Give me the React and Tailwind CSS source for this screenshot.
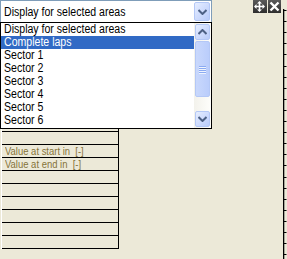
import React from "react";

const FONT = { fontFamily: '"Liberation Sans", Arial, sans-serif' };

function Chevron({ up = false }) {
  return (
    <svg width="9" height="6" viewBox="0 0 9 6" className="block">
      {up ? (
        <path d="M0.5 5 L4.5 1 L8.5 5" fill="none" stroke="#4D6185" strokeWidth="2" />
      ) : (
        <path d="M0.5 1 L4.5 5 L8.5 1" fill="none" stroke="#4D6185" strokeWidth="2" />
      )}
    </svg>
  );
}

function XpButton({ up, className = "" }) {
  return (
    <div
      className={
        "flex items-center justify-center rounded-[2px] border border-[#B4C8F6] bg-gradient-to-br from-[#E6EEFF] via-[#CFDCFD] to-[#B9CCFA] " +
        className
      }
    >
      <Chevron up={up} />
    </div>
  );
}

function Ruler() {
  const ticks = [];
  for (let i = 0; i < 23; i++) ticks.push(10 + i * 11.1);
  return (
    <svg width="6" height="259" viewBox="0 0 6 259" className="block">
      <rect x="2" y="9" width="1.3" height="250" fill="#000" />
      {ticks.map((y, i) => (
        <rect key={i} x="3" y={Math.round(y)} width="2.5" height="1" fill="#000" />
      ))}
    </svg>
  );
}

const items = [
  "Display for selected areas",
  "Complete laps",
  "Sector 1",
  "Sector 2",
  "Sector 3",
  "Sector 4",
  "Sector 5",
  "Sector 6",
];

function Narrow({ children }) {
  return (
    <span className="inline-block origin-left scale-x-[0.88] whitespace-nowrap">{children}</span>
  );
}

export default function App() {
  const rows = Array.from({ length: 17 }, (_, i) => i);
  return (
    <div className="relative flex h-[259px] w-[287px] overflow-hidden bg-[#ECE9D8]" style={FONT}>
      {/* left area */}
      <div className="flex w-[253px] flex-col">
        {/* select */}
        <div className="flex h-[23px] w-[212px] items-center border border-[#7F9DB9] bg-white">
          <div className="flex-1 overflow-hidden pl-[3px] pt-[2px] text-[12px] leading-[13px] text-black">
            <Narrow>Display for selected areas</Narrow>
          </div>
          <XpButton className="mr-[1px] h-[19px] w-[16px]" />
        </div>
        {/* table */}
        <div className="ml-[1px] mt-[5px] flex w-[118px] flex-col border-r border-black border-l border-l-white">
          {rows.map((i) => (
            <div
              key={i}
              className="flex h-[13px] items-center overflow-hidden border-b border-black pl-[3px] text-[11px] leading-[12px] text-[#857339]"
            >
              <span className="inline-block origin-left scale-x-[0.86] whitespace-pre">
                {i === 9 ? "Value at start in  [-]" : i === 10 ? "Value at end in  [-]" : ""}
              </span>
            </div>
          ))}
        </div>
      </div>

      {/* icons */}
      <div className="flex h-[13px] w-[28px] gap-[1px]">
        <div className="flex h-[13px] w-[14px] items-center justify-center bg-gradient-to-b from-[#5a5a5a] to-[#2e2e2e]">
          <svg width="11" height="11" viewBox="0 0 11 11">
            <path
              d="M5.5 0 L8 2.5 H6.3 V4.7 H8.5 V3 L11 5.5 L8.5 8 V6.3 H6.3 V8.5 H8 L5.5 11 L3 8.5 H4.7 V6.3 H2.5 V8 L0 5.5 L2.5 3 V4.7 H4.7 V2.5 H3 Z"
              fill="#fff"
            />
          </svg>
        </div>
        <div className="flex h-[13px] w-[14px] items-center justify-center bg-gradient-to-b from-[#5a5a5a] to-[#2e2e2e]">
          <svg width="11" height="11" viewBox="0 0 11 11">
            <path d="M1.5 1.5 L9.5 9.5 M9.5 1.5 L1.5 9.5" stroke="#fff" strokeWidth="2.4" />
          </svg>
        </div>
      </div>
      <Ruler />

      {/* open dropdown list */}
      <div className="absolute left-0 top-[22px] flex h-[107px] w-[212px] border border-black bg-white">
        <div className="flex w-[193px] flex-col">
          {items.map((t, i) => (
            <div
              key={t}
              className={
                "h-[13px] overflow-hidden pl-[3px] text-[12px] leading-[13px] " +
                (i === 1 ? "bg-[#316AC5] text-white" : "text-black")
              }
            >
              <Narrow>{t}</Narrow>
            </div>
          ))}
        </div>
        <div className="flex w-[17px] flex-col bg-gradient-to-r from-[#F3F2EC] to-[#FEFEFB]">
          <XpButton up className="mx-[1px] mt-[1px] h-[16px] w-[15px]" />
          <div className="mx-[1px] mt-[1px] flex h-[56px] w-[15px] flex-col items-center justify-center gap-[1px] rounded-[2px] border border-[#B4C8F6] bg-gradient-to-r from-[#C9D8FC] to-[#BACDFB]">
            {[0, 1, 2, 3].map((k) => (
              <div key={k} className="h-[1px] w-[7px] bg-[#8CABF2] shadow-[0_1px_0_#EEF4FE]" />
            ))}
          </div>
          <div className="flex-1" />
          <XpButton className="mx-[1px] mb-[1px] h-[16px] w-[15px]" />
        </div>
      </div>
    </div>
  );
}
